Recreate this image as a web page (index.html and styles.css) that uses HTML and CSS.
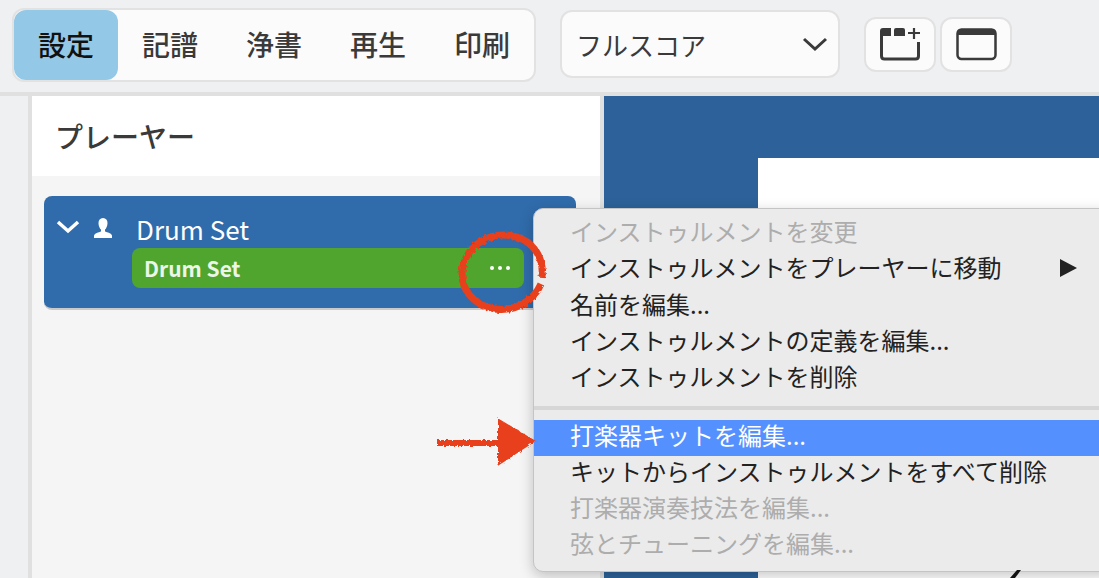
FILE: index.html
```html
<!DOCTYPE html>
<html lang="ja">
<head>
  <meta charset="UTF-8" />
  <title>Dorico</title>
  <link rel="stylesheet" href="styles.css">
</head>
<body>
  <header class="toolbar">
    <nav class="modes">
      <a class="mode active">設定</a>
      <a class="mode">記譜</a>
      <a class="mode">浄書</a>
      <a class="mode">再生</a>
      <a class="mode">印刷</a>
    </nav>
    <div class="layout-select">
      <span>フルスコア</span>
      <svg width="26" height="16" viewBox="0 0 26 16"><path d="M2 3l11 10L24 3" fill="none" stroke="#3a3a3a" stroke-width="3"/></svg>
    </div>
    <div class="tabs">
      <button class="tab-btn">
        <svg width="41" height="33" viewBox="0 0 41 33">
          <path d="M0 8V3q0-3 3-3h8v8zM14 2q0-2 2-2h7q2 0 2 2v6H14z" fill="#3a3a3a"/>
          <path d="M1.500 8v20q0 3 3 3h31q3 0 3-3V14" fill="none" stroke="#3a3a3a" stroke-width="3"/>
          <path d="M28 5h12M34 0v11" fill="none" stroke="#3a3a3a" stroke-width="2.200"/>
        </svg>
      </button>
      <button class="tab-btn">
        <svg width="41" height="33" viewBox="0 0 41 33">
          <rect x="1.500" y="1.500" width="38" height="29.500" rx="4" fill="none" stroke="#3a3a3a" stroke-width="2.500"/>
          <path d="M1 5q0-4 4-4h31q4 0 4 4v2H1z" fill="#3a3a3a"/>
        </svg>
      </button>
    </div>
  </header>

  <main class="workspace">
    <div class="rail"></div>
    <section class="players">
      <h2 class="players-title">プレーヤー</h2>
      <div class="players-list">
        <div class="player-card">
          <svg class="card-chevron" width="24" height="14" viewBox="0 0 24 14"><path d="M2 2l10 9L22 2" fill="none" stroke="#fff" stroke-width="3.500"/></svg>
          <svg class="card-person" width="22" height="22" viewBox="0 0 22 22"><path d="M11 1c3 0 4.500 2.200 4.500 5s-1.500 6-2.500 6.500v2c2 1 7 1.500 7 4.500v2H2v-2c0-3 5-3.500 7-4.500v-2C8 12 6.500 8.800 6.500 6S8 1 11 1z" fill="#fff"/></svg>
          <div class="card-body">
            <div class="player-name">Drum Set</div>
            <div class="instrument">
              <span>Drum Set</span>
              <span class="dots"><i></i><i></i><i></i></span>
            </div>
          </div>
        </div>
      </div>
    </section>
    <section class="score">
      <div class="page"></div>
    </section>
  </main>

  <ul class="context-menu">
    <li class="off">インストゥルメントを変更</li>
    <li class="has-sub">インストゥルメントをプレーヤーに移動<b class="arrow"></b></li>
    <li>名前を編集...</li>
    <li>インストゥルメントの定義を編集...</li>
    <li>インストゥルメントを削除</li>
    <li class="sep"></li>
    <li class="hover">打楽器キットを編集...</li>
    <li>キットからインストゥルメントをすべて削除</li>
    <li class="off">打楽器演奏技法を編集...</li>
    <li class="off">弦とチューニングを編集...</li>
  </ul>

  <svg class="note-mark" width="1099" height="578" viewBox="0 0 1099 578">
    <defs>
      <filter id="rough" x="-10%" y="-10%" width="120%" height="120%">
        <feTurbulence type="fractalNoise" baseFrequency="0.35" numOctaves="2" seed="4"/>
        <feDisplacementMap in="SourceGraphic" scale="4"/>
      </filter>
    </defs>
    <g filter="url(#rough)" fill="none" stroke="#e8401f">
      <path d="M542 277C544 258 534 241 513 236C490 231 468 245 463 266C458 288 474 306 495 309C516 312 534 300 541 284" stroke-width="7"/>
      <path d="M437 443H498" stroke-width="6"/>
      <path d="M499 420L534 441L499 464z" fill="#e8401f" stroke-width="2"/>
    </g>
    <path d="M1010 578l7-8h4l-6 8z" fill="#111"/>
  </svg>
</body>
</html>
```

FILE: styles.css
```css
* { box-sizing: border-box; }
html, body {
  margin: 0;
  height: 100%;
  overflow: hidden;
}
body {
  position: relative;
  width: 1099px;
  height: 578px;
  background: #eff0f2;
  color: #3a3a3a;
  font-family: "Noto Sans CJK JP", "Noto Sans", sans-serif;
}

/* top bar */
.toolbar {
  display: flex;
  align-items: flex-start;
  height: 96px;
  padding: 8px 0 0 12px;
  background: #eff0f2;
  border-bottom: 4px solid #e0e0e0;
}
.modes {
  display: flex;
  width: 524px;
  height: 74px;
  padding: 0;
  background: #fbfbfc;
  border: 2px solid #e2e2e2;
  border-radius: 12px;
}
.mode {
  width: 104px;
  height: 70px;
  line-height: 69px;
  text-align: center;
  font-size: 28px;
  font-weight: 500;
}
.mode.active {
  color: #111;
  background: #93c9e6;
  border-radius: 12px;
}
.layout-select {
  display: flex;
  align-items: center;
  justify-content: space-between;
  width: 280px;
  height: 68px;
  margin: 2px 0 0 24px;
  padding: 0 10px 0 14px;
  background: #fbfbfc;
  border: 2px solid #e2e2e2;
  border-radius: 12px;
  font-size: 26px;
}
.tabs {
  display: flex;
  gap: 4px;
  margin: 9px 0 0 24px;
}
.tab-btn {
  display: flex;
  align-items: center;
  justify-content: center;
  width: 72px;
  height: 55px;
  padding: 0;
  background: #fbfbfc;
  border: 2px solid #e2e2e2;
  border-radius: 12px;
}

/* main area */
.workspace {
  display: flex;
  height: 482px;
}
.rail {
  width: 32px;
  background: #eff0f2;
  border-right: 4px solid #e0e0e0;
}
.players {
  display: flex;
  flex-direction: column;
  width: 572px;
  background: #f5f5f5;
  border-right: 4px solid #e0e0e0;
}
.players-title {
  height: 80px;
  margin: 0;
  padding-left: 23px;
  background: #fff;
  font-size: 28px;
  font-weight: 500;
  line-height: 80px;
}
.players-list {
  padding: 20px 24px 0 12px;
}
.player-card {
  position: relative;
  height: 114px;
  padding: 14px 52px 0 88px;
  background: #306cab;
  border-bottom: 2px solid #c9c9c9;
  border-radius: 8px;
  color: #fff;
}
.card-chevron {
  position: absolute;
  left: 12px;
  top: 24px;
}
.card-person {
  position: absolute;
  left: 48px;
  top: 21px;
}
.player-name {
  height: 38px;
  font-size: 26px;
  line-height: 38px;
  margin-left: 4px;
}
.instrument {
  display: flex;
  align-items: center;
  justify-content: space-between;
  height: 40px;
  padding: 0 14px 0 12px;
  background: #50a52f;
  border-radius: 8px;
  font-size: 21px;
  font-weight: 700;
  color: #ecf6e8;
}
.dots {
  display: flex;
  gap: 4px;
}
.dots i {
  width: 4px;
  height: 4px;
  background: #fff;
  border-radius: 50%;
}
.score {
  flex: 1;
  padding: 62px 0 0 154px;
  background: #2c6299;
}
.page {
  height: 100%;
  background: #fff;
}

/* context menu, over the page */
.context-menu {
  position: absolute;
  left: 533px;
  top: 208px;
  width: 580px;
  height: 364px;
  margin: 0;
  padding: 5px 0 0;
  list-style: none;
  background: #ebebeb;
  border: 1px solid #c4c4c4;
  border-radius: 10px;
  box-shadow: 0 4px 14px rgba(0, 0, 0, 0.22);
  color: #222;
  font-size: 24px;
}
.context-menu li {
  position: relative;
  height: 36.300px;
  padding-left: 36px;
  line-height: 34px;
  white-space: nowrap;
}
.context-menu li.sep {
  height: 4px;
  margin: 11px 0 10px;
  padding: 0;
  background: #d6d6d6;
}
.context-menu .sep ~ li {
  height: 36px;
  line-height: 30px;
}
.context-menu li.off { color: #adadad; }
.context-menu li.hover {
  background: #5590ff;
  color: #fff;
}
.arrow {
  position: absolute;
  left: 526px;
  top: 9px;
  border-left: 17px solid #222;
  border-top: 9px solid transparent;
  border-bottom: 9px solid transparent;
}

/* hand drawn marks on top of the screenshot */
.note-mark {
  position: absolute;
  left: 0;
  top: 0;
  pointer-events: none;
}
```
